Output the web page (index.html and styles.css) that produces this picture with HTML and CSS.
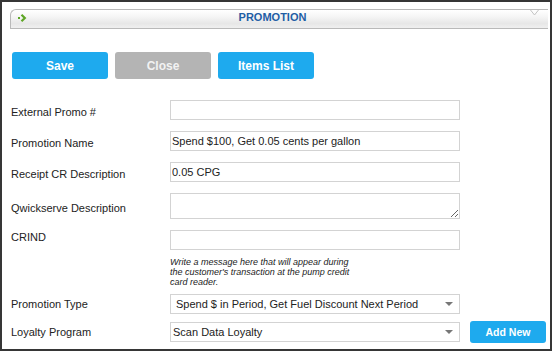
FILE: index.html
```html
<!DOCTYPE html>
<html lang="en">
<head>
    <meta charset="UTF-8">
    <title>Promotion</title>
    <link rel="stylesheet" href="styles.css">
</head>
<body>
    <div class="window">
        <div class="panel-head">
            <svg class="head-arrow" width="9" height="8" viewBox="0 0 9 8">
                <rect x="0" y="3" width="2" height="2" fill="#5ea626"/>
                <polyline points="3.5,0.8 6.8,4 3.5,7.2" fill="none" stroke="#5ea626" stroke-width="2.2"/>
            </svg>
            <span class="head-title">PROMOTION</span>
            <svg class="head-toggle" width="9" height="6" viewBox="0 0 9 6">
                <polyline points="0.5,0 4.5,5 8.5,0" fill="none" stroke="#c4c4c4" stroke-width="1"/>
            </svg>
        </div>

        <div class="toolbar">
            <button class="btn btn-blue">Save</button>
            <button class="btn btn-gray">Close</button>
            <button class="btn btn-blue">Items List</button>
        </div>

        <div class="form">
            <div class="row">
                <label class="field-label">External Promo #</label>
                <input class="field" type="text">
            </div>
            <div class="row">
                <label class="field-label">Promotion Name</label>
                <input class="field" type="text" value="Spend $100, Get 0.05 cents per gallon">
            </div>
            <div class="row">
                <label class="field-label">Receipt CR Description</label>
                <input class="field" type="text" value="0.05 CPG">
            </div>
            <div class="row">
                <label class="field-label">Qwickserve Description</label>
                <textarea class="field field-area"></textarea>
            </div>
            <div class="row row-crind">
                <label class="field-label">CRIND</label>
                <div>
                    <input class="field" type="text">
                    <p class="help">Write a message here that will appear during<br>the customer's transaction at the pump credit<br>card reader.</p>
                </div>
            </div>
            <div class="row row-select row-type">
                <label class="field-label">Promotion Type</label>
                <div class="select-wrap">
                    <select class="field field-select">
                        <option>Spend $ in Period, Get Fuel Discount Next Period</option>
                    </select>
                </div>
            </div>
            <div class="row row-select">
                <label class="field-label">Loyalty Program</label>
                <div class="select-wrap">
                    <select class="field field-select field-select-tight">
                        <option>Scan Data Loyalty</option>
                    </select>
                </div>
                <button class="btn btn-blue btn-small">Add New</button>
            </div>
        </div>
    </div>
</body>
</html>
```

FILE: styles.css
```css
html, body {
    margin: 0;
    padding: 0;
    background: #fff;
}

body {
    font-family: "Liberation Sans", Arial, sans-serif;
    color: #222;
}

.window {
    width: 552px;
    height: 351px;
    box-sizing: border-box;
    border: 2px solid #363636;
    padding: 7px 2px 0 8px;
    overflow: hidden;
}

/* panel header */
.panel-head {
    display: flex;
    align-items: flex-start;
    height: 18px;
    border: 1px solid #b9b9b9;
    border-right: none;
    border-top-left-radius: 6px;
    background: linear-gradient(#ffffff, #f6f6f6 35%, #e7e7e7 75%, #efefef);
    padding: 0 9px 0 7px;
}

.head-arrow {
    margin-top: 4px;
}

.head-title {
    flex: 1;
    text-align: center;
    font-size: 11px;
    font-weight: bold;
    line-height: 15px;
    color: #1f5ea5;
    padding-right: 12px;
}

/* buttons */
.toolbar {
    display: flex;
    gap: 7px;
    margin: 23px 0 0 2px;
}

.btn {
    width: 96px;
    height: 27px;
    border: none;
    border-radius: 3px;
    font-family: "Liberation Sans", Arial, sans-serif;
    font-size: 12px;
    font-weight: bold;
    color: #fff;
    padding: 0;
    cursor: pointer;
}

.btn-blue {
    background-color: #1eaaee;
}

.btn-gray {
    background-color: #b4b4b4;
    color: #f2f2f2;
}

.btn-small {
    width: 76px;
    height: 22px;
    font-size: 10.5px;
    margin-left: 10px;
}

/* form */
.form {
    margin-top: 21px;
    padding-left: 1px;
}

.row {
    display: flex;
    align-items: center;
    margin-bottom: 11px;
}

.field-label {
    width: 159px;
    font-size: 11px;
    line-height: 16px;
    padding-top: 4px;
}

.field {
    box-sizing: border-box;
    width: 290px;
    height: 20px;
    border: 1px solid #d3d3d3;
    border-radius: 0;
    margin: 0;
    padding: 0 1px;
    font-family: "Liberation Sans", Arial, sans-serif;
    font-size: 11px;
    color: #222;
    background: #fff;
    outline: none;
}

.field-area {
    display: block;
    height: 26px;
}

.row-crind {
    align-items: flex-start;
    margin-bottom: 7px;
}

.row-crind .field-label {
    line-height: 14px;
    padding-top: 0;
}

.row-crind .field {
    display: block;
}

.help {
    margin: 7px 0 0 0;
    font-size: 9px;
    font-style: italic;
    line-height: 10px;
}

.row-select .field-label {
    line-height: 20px;
    padding-top: 0;
}

.row-type {
    margin-bottom: 7px;
}

.select-wrap {
    position: relative;
}

.select-wrap::after {
    content: "";
    position: absolute;
    right: 7px;
    top: 8px;
    border-left: 4px solid transparent;
    border-right: 4px solid transparent;
    border-top: 4px solid #777;
}

.field-select {
    display: block;
    appearance: none;
    -webkit-appearance: none;
    padding-left: 5px;
}

.field-select-tight {
    padding-left: 2px;
}
```
